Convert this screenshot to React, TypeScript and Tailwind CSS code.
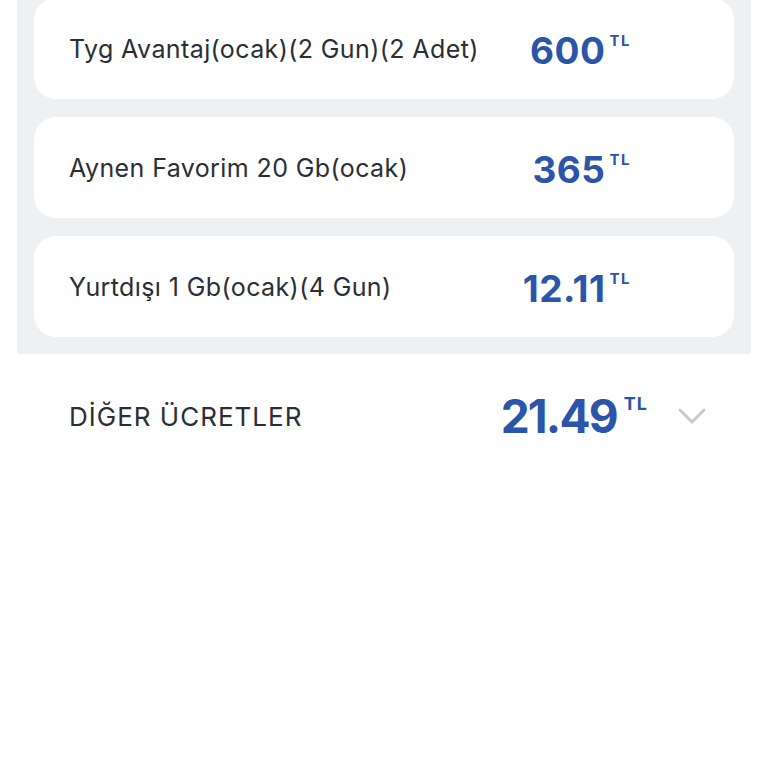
const items = [
    { label: 'Tyg Avantaj(ocak)(2 Gun)(2 Adet)', price: '600' },
    { label: 'Aynen Favorim 20 Gb(ocak)', price: '365' },
    { label: 'Yurtdışı 1 Gb(ocak)(4 Gun)', price: '12.11' },
]

const font = { fontFamily: 'Inter, "Noto Sans", sans-serif' }

export default function App() {
    return (
        <div className="min-h-[768px] bg-white" style={font}>
            <div className="mx-[17px] -mt-[2px] flex flex-col gap-[18px] bg-[#eef0f3] px-[17px] pb-[17px]">
                {items.map((it) => (
                    <div
                        key={it.label}
                        className="flex h-[101px] items-center rounded-[22px] bg-white pl-[35px]"
                    >
                        <span className="flex-1 pt-[3px] text-[25px] tracking-[0.4px] text-[#2a2e35]">
                            {it.label}
                        </span>
                        <span className="mr-[103px] flex items-start pt-[4px] text-[#2b55a8]">
                            <span className="text-[37px] font-bold leading-none tracking-[0.5px]">
                                {it.price}
                            </span>
                            <span className="ml-[4px] mt-[1px] text-[15px] font-bold leading-none tracking-[1.5px]">
                                TL
                            </span>
                        </span>
                    </div>
                ))}
            </div>
            <div className="flex h-[124px] items-center pl-[69px] pr-[62px]">
                <span className="flex-1 text-[26px] tracking-[1px] text-[#2a2e35]">DİĞER ÜCRETLER</span>
                <span className="flex items-start text-[#2b55a8]">
                    <span className="text-[46px] font-bold leading-none tracking-[-1.8px]">21.49</span>
                    <span className="ml-[7px] mt-[2px] text-[18px] font-bold leading-none tracking-[1px]">
                        TL
                    </span>
                </span>
                <svg
                    className="ml-[30px]"
                    width="28"
                    height="18"
                    viewBox="0 0 28 18"
                    fill="none"
                    stroke="#c8c9cc"
                    strokeWidth="3"
                    strokeLinecap="round"
                    strokeLinejoin="round"
                >
                    <path d="M2 3 L14 15 L26 3" />
                </svg>
            </div>
        </div>
    )
}
